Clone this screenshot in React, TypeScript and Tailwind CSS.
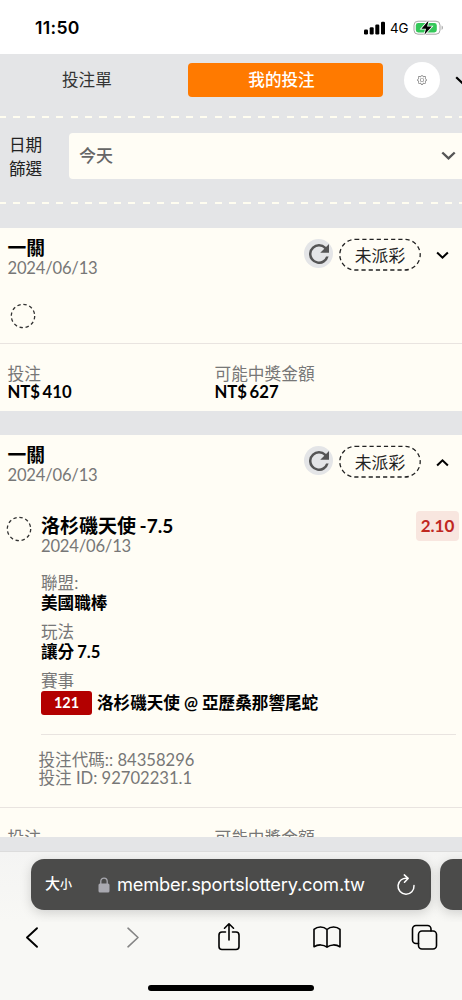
import type { ReactNode } from 'react'
import clsx from 'clsx'
import { BsGear } from 'react-icons/bs'

const TEXT_FONT = "font-[Lato,'Noto_Sans_CJK_TC',sans-serif]"
const SYSTEM_FONT = "font-[Inter,'Noto_Sans_CJK_TC',sans-serif]"

function Chevron({ className, up }: { className?: string; up?: boolean }) {
  return (
    <svg viewBox="0 0 14 9" className={clsx('shrink-0', className)} fill="none" stroke="currentColor">
      <path d={up ? 'M2 7l5-4.8L12 7' : 'M2 2l5 4.8L12 2'} strokeWidth="2.2" strokeLinecap="square" />
    </svg>
  )
}

function StatusBar() {
  return (
    <div className={clsx('flex h-[54px] shrink-0 items-center bg-white pt-[2px] pl-[35px]', SYSTEM_FONT)}>
      <span className="text-[17.6px] leading-none font-semibold tracking-[0.3px]">11:50</span>
      <svg viewBox="0 0 22 14" className="ml-auto h-[14px] w-[22px]" fill="#000">
        <rect x="0" y="8.5" width="4" height="5" rx="1.2" />
        <rect x="5.7" y="6.2" width="4" height="7.3" rx="1.2" />
        <rect x="11.3" y="3.6" width="4" height="9.9" rx="1.2" />
        <rect x="17" y="0.8" width="4" height="12.7" rx="1.2" />
      </svg>
      <span className="ml-[4px] w-[20px] pt-px text-[13.3px] leading-none">4G</span>
      <svg viewBox="0 0 31 16" className="mr-[18px] ml-[3px] h-[16px] w-[31px]">
        <rect x="1" y="1.2" width="26" height="13" rx="4" fill="none" stroke="#a6a6a6" />
        <path d="M28.6 5.6c1.8.7 1.8 3.6 0 4.3z" fill="#a6a6a6" />
        <rect x="2.8" y="3" width="21" height="9.4" rx="2.4" fill="#34c759" />
        <path
          d="M15.6.6L8.4 8.7h4.6l-1.6 6 7.4-8.2h-4.7z"
          fill="#000"
          stroke="#fff"
          strokeWidth="1.6"
          paintOrder="stroke"
        />
      </svg>
    </div>
  )
}

function DashedRule() {
  return (
    <div className="h-[2px] bg-[repeating-linear-gradient(90deg,#fffdf0_0_5.8px,transparent_5.8px_13px,#fffdf0_13px_14.4px)]" />
  )
}

function Header() {
  return (
    <div className="shrink-0 text-[16.6px]">
      <div className="flex h-[62px] items-start overflow-hidden pt-[8px]">
        <span className="ml-[62px] w-[126px] shrink-0 leading-[36px] text-[#333]">投注單</span>
        <button className="mt-[1px] h-[34px] w-[195px] shrink-0 rounded-[4px] bg-[#ff7a00] pr-[8px] font-medium text-white">
          我的投注
        </button>
        <div className="ml-[21px] flex h-[36px] w-[36px] shrink-0 items-center justify-center rounded-full bg-white">
          <BsGear className="h-[10px] w-[10px] text-[#777]" />
        </div>
        <Chevron className="mt-[14px] ml-[15px] h-[9px] w-[14px] text-black" />
      </div>
      <DashedRule />
      <div className="flex h-[84px] items-start pt-[15px]">
        <span className="ml-[9px] w-[60px] shrink-0 leading-[24px] text-[#222]">
          日期
          <br />
          篩選
        </span>
        <div className="flex h-[46px] flex-1 items-center rounded-l-[4px] bg-[#fffdf5] pr-[6px] pl-[10px] text-[17px] font-medium text-[#666]">
          今天
          <Chevron className="ml-auto h-[10px] w-[15px] text-[#555]" />
        </div>
      </div>
      <DashedRule />
    </div>
  )
}

function DashedCircle({ className }: { className?: string }) {
  return (
    <svg viewBox="0 0 26 26" className={clsx('h-[26px] w-[26px] shrink-0', className)}>
      <circle cx="13" cy="13" r="11.7" fill="none" stroke="#333" strokeWidth="1.3" strokeDasharray="3.4 2.726" />
    </svg>
  )
}

function CardHeader({ open }: { open?: boolean }) {
  return (
    <div className="flex items-start pt-[10px] pl-[7.5px]">
      <div className="flex-1">
        <div className="text-[18.8px] leading-[20px] font-bold text-black">一關</div>
        <div className="text-[16.6px] leading-[20px] tracking-[-0.2px] text-[#777]">2024/06/13</div>
      </div>
      <div className="mt-[1px] flex h-[29px] w-[29px] items-center justify-center rounded-full bg-[#e4e5e7]">
        <svg viewBox="4 4 16 16" className="h-[20px] w-[20px]" fill="#555">
          <path d="M17.65 6.35A7.96 7.96 0 0 0 12 4a8 8 0 1 0 7.73 10h-2.08A6 6 0 1 1 12 6c1.66 0 3.14.69 4.22 1.78L13 11h7V4z" />
        </svg>
      </div>
      <div className="relative ml-[6px] flex h-[33px] w-[82px] items-center justify-center pt-[3px] text-[16.8px] text-[#222]">
        <svg viewBox="0 0 82 33" className="absolute inset-0 h-[33px] w-[82px]">
          <rect
            x="0.8"
            y="1.4"
            width="80.4"
            height="30.6"
            rx="15.3"
            fill="none"
            stroke="#222"
            strokeWidth="1.3"
            strokeDasharray="4.2 3"
          />
        </svg>
        <span>未派彩</span>
      </div>
      <Chevron up={open} className="mt-[13px] mr-[13px] ml-[15px] h-[9px] w-[13px] text-black" />
    </div>
  )
}

function Amounts({ stake, payout }: { stake: string; payout: string }) {
  return (
    <div className="flex border-t border-[#e9e4e0] pt-[21px] pl-[7.5px] text-[16.7px] leading-[18px] text-[#777]">
      <div className="w-[207px] shrink-0">
        <div>投注</div>
        <div className="font-bold text-black [word-spacing:-1.5px]">{stake}</div>
      </div>
      <div>
        <div>可能中獎金額</div>
        <div className="font-bold text-black [word-spacing:-1.5px]">{payout}</div>
      </div>
    </div>
  )
}

function Detail({ label, children }: { label: string; children: ReactNode }) {
  return (
    <div className="mb-[8px] text-[16.6px]">
      <div className="leading-[20px] text-[#777]">{label}</div>
      <div className="leading-[21px] font-bold text-black">{children}</div>
    </div>
  )
}

function OpenBet() {
  return (
    <div className="flex h-[322px] items-start pt-[30px]">
      <DashedCircle className="mt-[1px] ml-[6px]" />
      <div className="ml-[9px] flex-1 pr-[6px]">
        <div className="flex items-start">
          <div className="flex-1">
            <div className="text-[19px] leading-[22px] font-bold text-black [word-spacing:-1px]">洛杉磯天使 -7.5</div>
            <div className="text-[16.6px] leading-[19px] tracking-[-0.2px] text-[#777]">2024/06/13</div>
          </div>
          <div className="-mt-[4px] -mr-[3px] flex h-[30px] w-[43px] items-center justify-center rounded-[4px] bg-[#f8e6df] text-[17px] font-bold text-[#c0281f]">
            2.10
          </div>
        </div>
        <div className="mt-[17px]">
          <Detail label="聯盟:">美國職棒</Detail>
          <Detail label="玩法">
            <span className="[word-spacing:-1px]">讓分 7.5</span>
          </Detail>
          <Detail label="賽事">
            <div className="flex items-center leading-[24px]">
              <span className="mr-[5px] h-[24px] w-[51px] rounded-[3px] bg-[#b30000] text-center text-[14.5px] text-white">
                121
              </span>
              洛杉磯天使 @ 亞歷桑那響尾蛇
            </div>
          </Detail>
        </div>
        <div className="mt-[19px] border-t border-[#e9e4e0]" />
        <div className="mt-[16px] -ml-[2.5px] text-[16.6px] leading-[18px] text-[#777]">
          <div>投注代碼:: 84358296</div>
          <div>投注 ID: 92702231.1</div>
        </div>
      </div>
    </div>
  )
}

function BrowserBar() {
  return (
    <div className={clsx('flex h-[149px] shrink-0 flex-col border-t border-[#dcdcdc] bg-[#f8f8f5]', SYSTEM_FONT)}>
      <div className="flex overflow-hidden bg-linear-to-b from-[#f4f4f3] to-[#f8f8f5] pt-[7px] pb-[12px] pl-[31px]">
        <div className="flex h-[51px] w-[400px] shrink-0 items-center rounded-[13px] bg-[#4b4b4a] text-white shadow-[0_3px_12px_rgba(0,0,0,0.16)]">
          <span className="ml-[14px] flex items-baseline font-medium">
            <span className="text-[15px]">大</span>
            <span className="text-[12px]">小</span>
          </span>
          <svg viewBox="0 0 12 16" className="ml-[26px] h-[16px] w-[12px]">
            <rect x="0.5" y="6.5" width="11" height="9" rx="1.5" fill="#a9a9b0" />
            <path d="M2.8 7V4.3a3.2 3.2 0 0 1 6.4 0V7" fill="none" stroke="#a9a9b0" strokeWidth="1.3" />
          </svg>
          <span className="ml-[7px] w-[252px] text-[18.3px] tracking-[-0.2px]">member.sportslottery.com.tw</span>
          <svg
            viewBox="0 0 20 22"
            className="mr-[15px] ml-auto h-[22px] w-[20px]"
            fill="none"
            stroke="#fff"
            strokeWidth="1.5"
            strokeLinecap="round"
            strokeLinejoin="round"
          >
            <path d="M11.5 4.3A8 8 0 1 0 18 11.6" />
            <path d="M8.3.9l3.8 3.5-3.6 3.9" />
          </svg>
        </div>
        <div className="ml-[9px] h-[51px] w-[60px] shrink-0 rounded-[13px] bg-[#4b4b4a] shadow-[0_3px_12px_rgba(0,0,0,0.16)]" />
      </div>
      <div className="-mt-px flex h-[32px] items-center pl-[24px] [&_svg]:shrink-0 [&_svg]:fill-none [&_svg]:[stroke-linecap:round] [&_svg]:[stroke-linejoin:round]">
        <svg viewBox="0 0 16 24" className="h-[24px] w-[16px]" stroke="#000" strokeWidth="1.9">
          <path d="M13 3.2L3 12.5l10 9.3" />
        </svg>
        <svg viewBox="0 0 16 24" className="ml-[85px] h-[24px] w-[16px]" stroke="#858585" strokeWidth="1.6">
          <path d="M3 3.2l10 9.3-10 9.3" />
        </svg>
        <svg viewBox="0 0 24 30" className="ml-[76px] h-[30px] w-[24px]" stroke="#000" strokeWidth="1.6">
          <path d="M8.5 10H5a3 3 0 0 0-3 3v11.5a3 3 0 0 0 3 3h14a3 3 0 0 0 3-3V13a3 3 0 0 0-3-3h-3.500" />
          <path d="M12 18V2M7.5 6.2L12 1.8l4.5 4.4" />
        </svg>
        <svg viewBox="0 0 28 24" className="ml-[72px] h-[24px] w-[28px]" stroke="#000" strokeWidth="1.6">
          <path d="M14 4.5C10.500 1.200 4.500 1.200 1 4.300v17.500c3.800-2.600 9.500-2.500 13 .3 3.500-2.800 9.200-2.900 13-.3V4.300C23.500 1.200 17.500 1.200 14 4.500zM14 4.500v17.600" />
        </svg>
        <svg viewBox="0 0 28 26" className="ml-[70px] h-[26px] w-[28px]" stroke="#000" strokeWidth="1.6">
          <rect x="7.5" y="7" width="18" height="18" rx="3.5" />
          <path d="M7.5 19.5H5A3.500 3.500 0 0 1 1.500 16V5A3.500 3.500 0 0 1 5 1.500h11.500A3.500 3.500 0 0 1 20 5v2" />
        </svg>
      </div>
      <div className="mx-auto mt-auto mb-[9px] h-[6px] w-[166px] rounded-full bg-black" />
    </div>
  )
}

export default function App() {
  return (
    <div className={clsx('flex h-[1000px] w-[462px] flex-col overflow-hidden bg-[#e4e5e7]', TEXT_FONT)}>
      <StatusBar />
      <Header />
      <div className="mt-[24px] mb-[14px] min-h-0 flex-1 overflow-hidden">
        <section className="flex h-[183px] flex-col bg-[#fffdf5]">
          <CardHeader />
          <DashedCircle className="mt-[25px] mb-auto ml-[10px]" />
          <div className="h-[68px]">
            <Amounts stake="NT$ 410" payout="NT$ 627" />
          </div>
        </section>
        <section className="mt-[24px] bg-[#fffdf5]">
          <CardHeader open />
          <OpenBet />
          <Amounts stake="NT$ 410" payout="NT$ 861" />
        </section>
      </div>
      <BrowserBar />
    </div>
  )
}
